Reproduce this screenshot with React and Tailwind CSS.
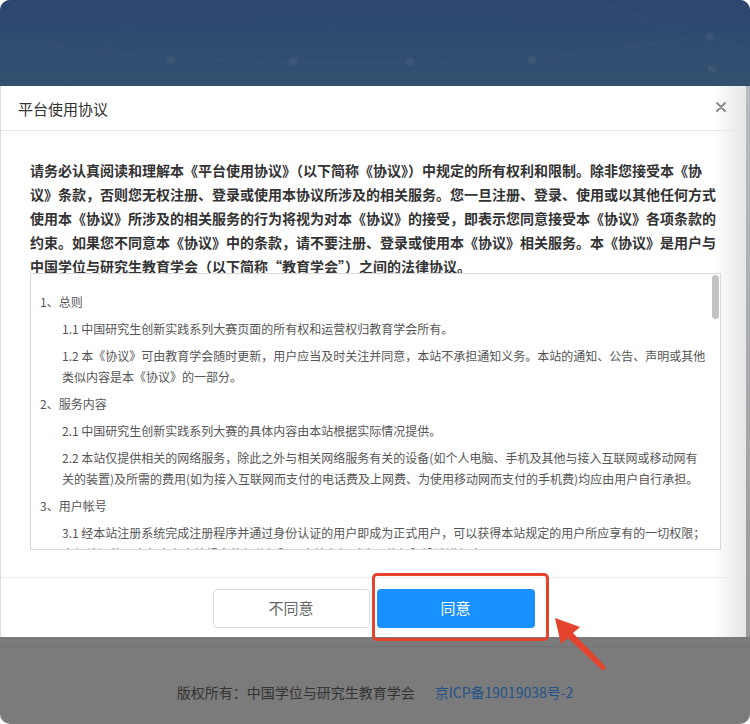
import React from "react";

const boldLines = [
  "请务必认真阅读和理解本《平台使用协议》（以下简称《协议》）中规定的所有权利和限制。除非您接受本《协",
  "议》条款，否则您无权注册、登录或使用本协议所涉及的相关服务。您一旦注册、登录、使用或以其他任何方式",
  "使用本《协议》所涉及的相关服务的行为将视为对本《协议》的接受，即表示您同意接受本《协议》各项条款的",
  "约束。如果您不同意本《协议》中的条款，请不要注册、登录或使用本《协议》相关服务。本《协议》是用户与",
  "中国学位与研究生教育学会（以下简称“教育学会”）之间的法律协议。",
];

const sections = [
  { indent: false, lines: ["1、总则"] },
  { indent: true, lines: ["1.1 中国研究生创新实践系列大赛页面的所有权和运营权归教育学会所有。"] },
  {
    indent: true,
    lines: [
      "1.2 本《协议》可由教育学会随时更新，用户应当及时关注并同意，本站不承担通知义务。本站的通知、公告、声明或其他",
      "类似内容是本《协议》的一部分。",
    ],
  },
  { indent: false, lines: ["2、服务内容"] },
  { indent: true, lines: ["2.1 中国研究生创新实践系列大赛的具体内容由本站根据实际情况提供。"] },
  {
    indent: true,
    lines: [
      "2.2 本站仅提供相关的网络服务，除此之外与相关网络服务有关的设备(如个人电脑、手机及其他与接入互联网或移动网有",
      "关的装置)及所需的费用(如为接入互联网而支付的电话费及上网费、为使用移动网而支付的手机费)均应由用户自行承担。",
    ],
  },
  { indent: false, lines: ["3、用户帐号"] },
  {
    indent: true,
    lines: [
      "3.1 经本站注册系统完成注册程序并通过身份认证的用户即成为正式用户，可以获得本站规定的用户所应享有的一切权限；",
      "未经认证的用户仅享有本站规定的部分权限。本站有权对会员的权限设计进行变更。",
    ],
  },
];

export default function App() {
  return (
    <div className="w-[750px] h-[724px] rounded-[10px] overflow-hidden bg-[#7b7b7b] flex flex-col font-['Noto_Sans_CJK_SC',sans-serif] relative">
      {/* top blue page background */}
      <div className="h-[86px] shrink-0 bg-[linear-gradient(180deg,#2c4670,#33506f)] relative overflow-hidden">
        <svg width="750" height="86" className="block" viewBox="0 0 750 86">
          <g stroke="rgba(255,255,255,0.035)" strokeWidth="1" fill="none">
            <line x1="0" y1="40" x2="171" y2="60" />
            <line x1="171" y1="60" x2="293" y2="62" />
            <line x1="293" y1="62" x2="410" y2="62" />
            <line x1="410" y1="62" x2="532" y2="60" />
            <line x1="532" y1="60" x2="710" y2="36" />
            <line x1="710" y1="36" x2="710" y2="69" />
            <line x1="100" y1="0" x2="171" y2="60" />
            <line x1="160" y1="0" x2="60" y2="86" />
            <line x1="620" y1="0" x2="710" y2="69" />
            <line x1="590" y1="0" x2="750" y2="50" />
            <line x1="360" y1="0" x2="293" y2="62" />
          </g>
          <g fill="rgba(255,255,255,0.05)">
            <circle cx="171" cy="60" r="4" />
            <circle cx="293" cy="62" r="4" />
            <circle cx="410" cy="62" r="4" />
            <circle cx="532" cy="60" r="4" />
            <circle cx="710" cy="36" r="4" />
            <circle cx="712" cy="69" r="4" />
          </g>
        </svg>
      </div>

      {/* modal row */}
      <div className="flex shrink-0">
        <div className="w-[746px] h-[551px] flex flex-col bg-[linear-gradient(90deg,#ffffff_95.5%,#e6e6e6)] border-l border-[#dcdcdc]">
          {/* header */}
          <div className="h-[45px] shrink-0 border-b border-[#e8e8e8] flex items-center justify-between pl-[17px] pr-[20px]">
            <span className="text-[15px] text-[#333] leading-none pt-[1px]">平台使用协议</span>
            <svg width="10" height="10" viewBox="0 0 10 10" className="mt-[-2px]">
              <path d="M1 1L9 9M9 1L1 9" stroke="#8c8c8c" strokeWidth="2" strokeLinecap="round" />
            </svg>
          </div>

          {/* body */}
          <div className="h-[446px] shrink-0 pt-[27px] pl-[29px] pr-[26px] flex flex-col">
            <div className="text-[14px] leading-[24px] font-bold text-[#333]">
              {boldLines.map((l, i) => (
                <div key={i} className="whitespace-nowrap">
                  {l}
                </div>
              ))}
            </div>
            <div className="mt-[-5px] h-[277px] w-[691px] border border-[#d9d9d9] bg-white relative overflow-hidden">
              <div className="pt-[17px] pl-[9px] text-[12px] leading-[21px] text-[#555]">
                {sections.map((s, i) => (
                  <div key={i} className={"mb-[6px] " + (s.indent ? "indent-[22px]" : "")}>
                    {s.lines.map((l, j) => (
                      <div key={j} className="whitespace-nowrap">
                        {l}
                      </div>
                    ))}
                  </div>
                ))}
              </div>
              {/* scrollbar thumb */}
              <div className="absolute right-[1px] top-[1px] w-[7px] h-[44px] rounded-full bg-[#c4c4c4]" />
            </div>
          </div>

          {/* footer */}
          <div className="h-[60px] shrink-0 border-t border-[#ececec] flex justify-center pt-[11px] gap-[7px]">
            <button className="w-[157px] h-[39px] rounded-[4px] border border-[#dcdcdc] bg-white text-[15px] text-[#666]">
              不同意
            </button>
            <button className="w-[158px] h-[39px] rounded-[4px] bg-[#1890ff] text-[15px] text-white">
              同意
            </button>
          </div>
        </div>
        <div className="flex-1 bg-[linear-gradient(180deg,#b8bcc2,#9a9a9a)]" />
      </div>

      {/* page footer */}
      <div className="flex-1 flex flex-col">
        <div className="h-[10px] border-b border-[#727272]" />
        <div className="flex-1 flex items-start justify-center pt-[35px] text-[14px] leading-[20px]">
          <span className="text-[#333]">版权所有：中国学位与研究生教育学会</span>
          <span className="ml-[20px] text-[#23528a]">京ICP备19019038号-2</span>
        </div>
      </div>

      {/* annotation: red highlight box */}
      <div className="absolute left-[372px] top-[573px] w-[177px] h-[68px] border-[3px] border-[#e4432d] rounded-[5px]" />
      {/* annotation: red arrow */}
      <svg className="absolute left-[548px] top-[610px]" width="70" height="70" viewBox="548 610 70 70">
        <polygon
          points="555,618 580,627 573,633 606,667 603,671 568,638 561,644"
          fill="#e4432d"
        />
      </svg>
    </div>
  );
}
